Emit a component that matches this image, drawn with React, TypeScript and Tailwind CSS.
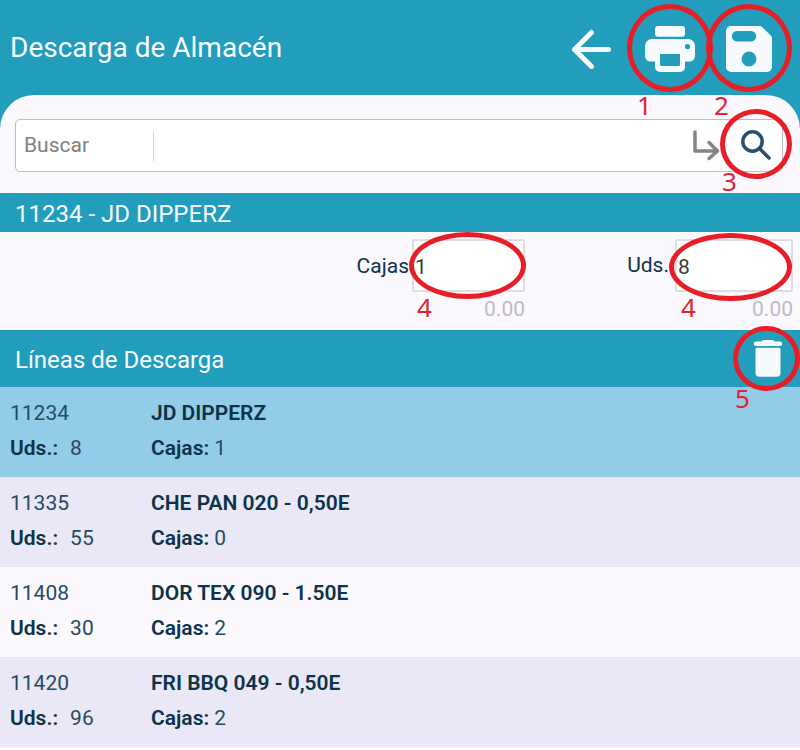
import { useState } from 'react'

interface Line {
  code: string
  name: string
  units: number
  boxes: number
}

const lines: Line[] = [
  { code: '11234', name: 'JD DIPPERZ', units: 8, boxes: 1 },
  { code: '11335', name: 'CHE PAN 020 - 0,50E', units: 55, boxes: 0 },
  { code: '11408', name: 'DOR TEX 090 - 1.50E', units: 30, boxes: 2 },
  { code: '11420', name: 'FRI BBQ 049 - 0,50E', units: 96, boxes: 2 },
]

// red ellipse + step number drawn over a control
function Mark({ n, ring, label }: { n: number; ring: string; label: string }) {
  return (
    <>
      <span className={`absolute z-10 pointer-events-none rounded-[50%] border-5 border-[#e61e28] ${ring}`} />
      <span className={`absolute z-10 pointer-events-none font-['Noto_Sans',sans-serif] text-[26px] leading-7 text-[#e02430] ${label}`}>
        {n}
      </span>
    </>
  )
}

function BackIcon() {
  return (
    <svg width="40" height="40" viewBox="0 0 40 40" fill="none" stroke="currentColor" strokeWidth="5" strokeLinecap="round" strokeLinejoin="round">
      <path d="M20.5 3.500 3.500 20.500 20.500 37.500M3.500 20.500h34" />
    </svg>
  )
}

function PrintIcon() {
  return (
    <svg width="50" height="46" viewBox="0 0 50 46" fill="currentColor" fillRule="evenodd">
      <rect x="10" y="0" width="30" height="10.7" rx="3" />
      <path d="M7 13h36a7 7 0 0 1 7 7v10a5.5 5.5 0 0 1-5.5 5.5H40V41a5 5 0 0 1-5 5H15a5 5 0 0 1-5-5v-5.500H5.500A5.500 5.500 0 0 1 0 30V20a7 7 0 0 1 7-7ZM15 28v10.500a1.500 1.500 0 0 0 1.500 1.500h17a1.500 1.500 0 0 0 1.500-1.500V28ZM42.500 18a2.600 2.600 0 1 0 0 5.200 2.600 2.600 0 0 0 0-5.200Z" />
    </svg>
  )
}

function SaveIcon() {
  return (
    <svg width="46" height="46" viewBox="0 0 46 46" fill="currentColor" fillRule="evenodd">
      <path d="M5 0h28.500q1.500 0 2.600 1l8.700 8.500q1.200 1.200 1.200 3V41a5 5 0 0 1-5 5H5a5 5 0 0 1-5-5V5a5 5 0 0 1 5-5ZM11 5a5.200 5.200 0 0 0 0 10.500h14A5.200 5.200 0 0 0 25 5ZM23 25.600a7.400 7.400 0 1 0 0 14.800 7.400 7.400 0 0 0 0-14.800Z" />
    </svg>
  )
}

function EnterIcon() {
  return (
    <svg width="28" height="32" viewBox="0 0 28 32" fill="none" stroke="currentColor" strokeWidth="3.5" strokeLinecap="round" strokeLinejoin="round">
      <path d="M2 2v19H24.500M16 12.500 24.500 21 16 28.500" />
    </svg>
  )
}

function SearchIcon() {
  return (
    <svg width="32" height="32" viewBox="0 0 32 32" fill="none" stroke="currentColor" strokeWidth="3.5" strokeLinecap="round">
      <circle cx="11.500" cy="11.500" r="9.700" />
      <path d="m19 19 9 9" />
    </svg>
  )
}

function TrashIcon() {
  return (
    <svg width="30" height="38" viewBox="0 0 30 38" fill="currentColor">
      <path d="M3 1.500h5Q9 0 11 0h8q2 0 3 1.500h5a2.200 2.200 0 0 1 0 4.500H3a2.200 2.200 0 0 1 0-4.500Z" />
      <path d="M4 7.800h22q1.500 0 1.500 1.500v23.500a4 4 0 0 1-4 4h-17a4 4 0 0 1-4-4V9.300q0-1.500 1.500-1.500Z" />
    </svg>
  )
}

export default function App() {
  const [query, setQuery] = useState('')
  const [boxes, setBoxes] = useState('1')
  const [units, setUnits] = useState('8')
  const [selected, setSelected] = useState('11234')

  return (
    <div className="min-h-screen overflow-x-hidden bg-[#229ebc] font-[Roboto,sans-serif] text-[21px] text-[#0d3349]">
      <header className="flex h-[95px] items-center pl-[10px] pr-7 text-[#f7fbff]">
        <h1 className="flex-1 text-[28px]">Descarga de Almacén</h1>
        <button type="button" aria-label="Volver" className="mr-[34px] mt-0.5">
          <BackIcon />
        </button>
        <div className="relative mr-[31px] mt-0.5">
          <button type="button" aria-label="Imprimir" className="block">
            <PrintIcon />
          </button>
          <Mark n={1} ring="-left-[18px] -top-[22px] h-[88px] w-[86px]" label="-left-2 top-[65px]" />
        </div>
        <div className="relative mt-0.5">
          <button type="button" aria-label="Guardar" className="block">
            <SaveIcon />
          </button>
          <Mark n={2} ring="-left-[20px] -top-[22px] h-[88px] w-[86px]" label="-left-3 top-[65px]" />
        </div>
      </header>

      <main className="min-h-[calc(100vh-95px)] rounded-t-[34px] bg-[#fbf9fe]">
        <form className="pb-[21px] pl-[15px] pr-[17px] pt-6" onSubmit={e => e.preventDefault()}>
          <div className="flex h-[53px] items-center rounded-[5px] border border-[#bdbcc1] bg-white pr-[9px]">
            <input
              aria-label="Buscar"
              placeholder="Buscar"
              value={query}
              onChange={e => setQuery(e.target.value)}
              className="h-[30px] w-[138px] border-r border-[#d5d5d5] pl-2 outline-none placeholder:text-[#808080]"
            />
            <input aria-label="Artículo" className="h-[30px] min-w-0 flex-1 px-2 outline-none" />
            <button type="button" aria-label="Aceptar" className="mr-5 text-[#858585]">
              <EnterIcon />
            </button>
            <div className="relative">
              <button type="submit" aria-label="Lupa" className="block text-[#284f6e]">
                <SearchIcon />
              </button>
              <Mark n={3} ring="-left-[21px] -top-[21px] h-[70px] w-[72px]" label="-left-[19px] top-[37px]" />
            </div>
          </div>
        </form>

        <h2 className="flex h-[39px] items-center bg-[#229ebc] pl-[15px] pt-0.5 text-[24px] text-[#f7fbff]">11234 - JD DIPPERZ</h2>

        <section className="grid h-[98px] grid-cols-[1fr_268px] pr-[7px] pt-[7px]">
          <div className="flex justify-end">
            <label htmlFor="boxes" className="mr-[3px] leading-[54px]">Cajas</label>
            <div className="relative w-[113px] text-right">
              <input
                id="boxes"
                value={boxes}
                onChange={e => setBoxes(e.target.value)}
                className="block h-[53px] w-full rounded-xs border-2 border-[#dedde2] bg-white pl-px pt-0.5 text-[#3c3c3c] outline-none"
              />
              <span className="block leading-[34px] text-[#bdbcc2]">0.00</span>
              <Mark n={4} ring="-left-[3px] -top-[7px] h-[67px] w-[117px]" label="left-[5px] top-[54px]" />
            </div>
          </div>
          <div className="flex justify-end">
            <label htmlFor="units" className="mr-[6px] leading-[53px]">Uds.</label>
            <div className="relative w-[118px] text-right">
              <input
                id="units"
                value={units}
                onChange={e => setUnits(e.target.value)}
                className="block h-[53px] w-full rounded-xs border-2 border-[#dedde2] bg-white pl-px pt-0.5 text-[#3c3c3c] outline-none"
              />
              <span className="block leading-[34px] text-[#bdbcc2]">0.00</span>
              <Mark n={4} ring="-left-[6px] -top-[6px] h-[68px] w-[123px]" label="left-[6px] top-[54px]" />
            </div>
          </div>
        </section>

        <div className="flex h-[57px] items-center justify-between bg-[#229ebc] pl-[15px] pr-[17px] text-[#f7fbff]">
          <h2 className="pt-0.5 text-[24px]">Líneas de Descarga</h2>
          <div className="relative">
            <button type="button" aria-label="Eliminar" className="block">
              <TrashIcon />
            </button>
            <Mark n={5} ring="-left-[20px] -top-[14px] h-[65px] w-[67px]" label="-left-[18px] top-[44px]" />
          </div>
        </div>

        <ul>
          {lines.map(line => (
            <li key={line.code} className={line.code === selected ? 'bg-[#92cce7]' : 'odd:bg-[#fbf9fe] even:bg-[#eae8f6]'}>
              <button
                type="button"
                onClick={() => setSelected(line.code)}
                className="grid h-[90px] w-full grid-cols-[141px_1fr] content-start pl-[10px] pt-[9px] text-left leading-[35px]"
              >
                <span className="text-[#274a5f]">{line.code}</span>
                <span className="font-semibold">{line.name}</span>
                <span className="flex gap-3">
                  <b className="font-semibold">Uds.:</b>
                  <span className="text-[#274a5f]">{line.units}</span>
                </span>
                <span className="flex gap-[5px]">
                  <b className="font-semibold">Cajas:</b>
                  <span className="text-[#274a5f]">{line.boxes}</span>
                </span>
              </button>
            </li>
          ))}
        </ul>
      </main>
    </div>
  )
}
